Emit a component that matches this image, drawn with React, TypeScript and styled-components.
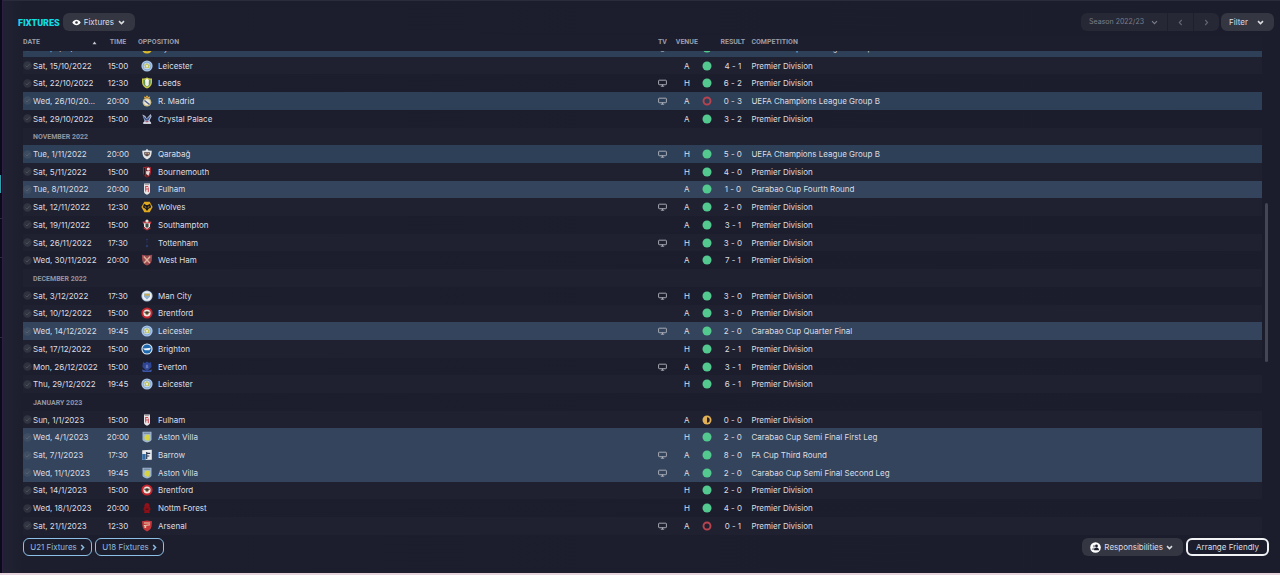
import React, { useLayoutEffect, useRef } from 'react';
import styled, { createGlobalStyle, css } from 'styled-components';

const GlobalStyle = createGlobalStyle`
  *, *::before, *::after { box-sizing: border-box; }
  body {
    margin: 0;
    background: #1b1d2c;
    color: #dcdde2;
    font: 400 8px/14px Inter, "Liberation Sans", sans-serif;
  }
  button, select { font: inherit; color: inherit; }
`;

/* ---------- page frame ---------- */

const Shell = styled.div`
  display: flex;
  height: 100vh;
  min-height: 240px;
  border-bottom: 2px solid #e6d3dc;
`;

const Rail = styled.nav`
  display: flex;
  flex-direction: column;
  flex: none;
  width: 3px;
  padding-top: 175px;
  background: #0b0a1b;
  border-right: 1px solid #2c1f40;
`;

const RailMarker = styled.span`
  width: 1px;
  height: 18px;
  background: #2fa3ad;
`;

const RailLine = styled.span<{ $gap: number }>`
  height: 1px;
  margin-top: ${(p) => p.$gap}px;
  background: #2a2740;
`;

const Page = styled.main`
  display: flex;
  flex-direction: column;
  flex: 1;
  min-width: 0;
  border-top: 1px solid #2a2c3b;
  background: linear-gradient(90deg, #202132 0, #1d1e2d 20px, #1b1d2c 100%);
`;

/* ---------- toolbar ---------- */

const Bar = styled.header`
  display: flex;
  align-items: center;
  flex: none;
  padding: 12px 6px 5px 15px;
`;

const Title = styled.h1`
  margin: 0 3px 0 0;
  padding-top: 2px;
  color: #13dbe6;
  font: 900 9px/16px Roboto, "Liberation Sans", sans-serif;
`;

const Spacer = styled.div`
  flex: 1;
`;

const raised = css`
  background: #343642;
  border-radius: 6px;
  height: 18px;
`;

const ViewPicker = styled.label`
  ${raised}
  display: flex;
  align-items: center;
  gap: 3px;
  padding: 0 10px 0 9px;
`;

const Select = styled.select`
  appearance: none;
  margin: 0;
  padding: 0;
  border: 0;
  background: transparent;
  line-height: 14px;
  cursor: pointer;
`;

const SeasonGroup = styled.div`
  display: flex;
  height: 18px;
  margin-right: 2px;
  border-radius: 6px;
  overflow: hidden;
  background: #262835;
  color: #7c7e89;
`;

const SeasonPicker = styled.label`
  display: flex;
  align-items: center;
  justify-content: space-between;
  width: 86px;
  padding: 0 9px 0 8px;
  font-size: 7px;
`;

const StepButton = styled.button`
  display: flex;
  align-items: center;
  justify-content: center;
  width: 26px;
  padding: 0;
  border: 0;
  border-left: 1px solid #1e202d;
  background: transparent;
  color: #636570;
`;

const MenuButton = styled.button<{ $gap: number }>`
  ${raised}
  display: flex;
  align-items: center;
  gap: ${(p) => p.$gap}px;
  padding: 0 10px 0 8px;
  border: 0;
  cursor: pointer;
`;

/* ---------- fixtures table ---------- */

const ListArea = styled.section`
  display: grid;
  grid-template-columns: minmax(0, 1fr) 18px;
  flex: 1;
  min-height: 0;
  padding-left: 20px;
`;

const Scroller = styled.div`
  overflow-y: auto;
  scrollbar-width: none;
`;

const Table = styled.table`
  width: 100%;
  height: 511px;
  table-layout: fixed;
  border-collapse: collapse;
`;

const Col = styled.col<{ $w?: string }>`
  width: ${(p) => p.$w ?? 'auto'};
`;

const Th = styled.th<{ $align?: string; $indent?: number }>`
  position: sticky;
  top: 0;
  z-index: 1;
  height: 15px;
  padding: 0 0 0 ${(p) => p.$indent ?? 0}px;
  background: #1c1d2d;
  color: #9a9ca7;
  font: 700 7px/13px Roboto, "Liberation Sans", sans-serif;
  text-align: ${(p) => p.$align ?? 'left'};
  white-space: nowrap;
  vertical-align: top;
`;

const SortButton = styled.button`
  display: flex;
  align-items: center;
  justify-content: space-between;
  width: 100%;
  padding: 0 8px 0 0;
  border: 0;
  background: transparent;
`;

type Tone = 'europe' | 'cup' | undefined;

const toneColor = { europe: '#2d4058', cup: '#33445c' };

const Row = styled.tr<{ $tone?: Tone }>`
  background: ${(p) => (p.$tone ? toneColor[p.$tone] : 'transparent')};
  &:nth-child(even) {
    background: ${(p) => (p.$tone ? toneColor[p.$tone] : '#1f2130')};
  }
`;

const Td = styled.td<{ $align?: string }>`
  padding: 0;
  text-align: ${(p) => p.$align ?? 'left'};
  white-space: nowrap;
  line-height: 14px;
  vertical-align: middle;
`;

const MonthCell = styled.th`
  padding: 2px 0 0 10px;
  color: #9395a0;
  font: 700 7px/12px Roboto, "Liberation Sans", sans-serif;
  text-align: left;
  vertical-align: middle;
`;

const Inline = styled.span<{ $indent?: number; $gap?: number }>`
  display: flex;
  align-items: center;
  gap: ${(p) => p.$gap ?? 0}px;
  padding-left: ${(p) => p.$indent ?? 0}px;
`;

const Glyph = styled.svg`
  display: block;
  flex: none;
`;

const CenteredGlyph = styled(Glyph)`
  margin: 0 auto;
`;

const Track = styled.div`
  display: flex;
  flex-direction: column;
  padding-left: 3px;
`;

const TrackGap = styled.span<{ $share: number }>`
  flex: ${(p) => p.$share};
`;

const Thumb = styled.span`
  flex: 159;
  width: 3px;
  border-radius: 2px;
  background: #444653;
`;

/* ---------- footer ---------- */

const Footer = styled.footer`
  display: flex;
  align-items: center;
  flex: none;
  gap: 3px;
  padding: 3px 11px 17px 20px;
`;

const SquadLink = styled.a`
  display: flex;
  align-items: center;
  justify-content: center;
  gap: 3px;
  width: 69px;
  height: 18px;
  border: 1px solid #8cc0e6;
  border-radius: 6px;
  color: #8dbbe0;
  text-decoration: none;
`;

const OutlineButton = styled.button`
  height: 18px;
  width: 83px;
  padding: 0;
  border: 2px solid #f1f2f4;
  border-radius: 6px;
  background: transparent;
  line-height: 14px;
  white-space: nowrap;
  cursor: pointer;
`;

/* ---------- small icons ---------- */

const Chevron = ({ bold }: { bold?: boolean }) => (
  <Glyph width="7" height="5" viewBox="0 0 7 5" aria-hidden="true">
    <path d="M1 1.1 3.5 3.6 6 1.1" fill="none" stroke="currentColor" strokeWidth={bold ? 1.5 : 1.1} />
  </Glyph>
);

const SideChevron = ({ left, bold }: { left?: boolean; bold?: boolean }) => (
  <Glyph width="5" height="7" viewBox="0 0 5 7" aria-hidden="true">
    <path
      d={left ? 'M3.7 1 1.3 3.5 3.7 6' : 'M1.2 1 3.6 3.5 1.2 6'}
      fill="none"
      stroke="currentColor"
      strokeWidth={bold ? 1.5 : 1.1}
    />
  </Glyph>
);

const Eye = () => (
  <Glyph width="9" height="7" viewBox="0 0 9 7" aria-hidden="true">
    <path d="M.3 3.500C1.400 1.700 2.800.8 4.500.8s3.100.9 4.200 2.700C7.600 5.300 6.200 6.200 4.500 6.200S1.400 5.300.3 3.500Z" fill="#fff" />
    <circle cx="4.500" cy="3.500" r="1.300" fill="#343642" />
  </Glyph>
);

const People = () => (
  <Glyph width="11" height="11" viewBox="0 0 11 11" aria-hidden="true">
    <circle cx="5.500" cy="5.500" r="5.300" fill="#fff" />
    <circle cx="4" cy="4.100" r="1.200" fill="#9a9ca5" />
    <path d="M1.800 8c0-1.500.9-2.500 2.200-2.500S6 6.500 6 8Z" fill="#9a9ca5" />
    <circle cx="6.500" cy="4" r="1.400" fill="#1b1d2c" />
    <path d="M4.100 8.200c0-1.700 1-2.700 2.400-2.700s2.500 1 2.500 2.700Z" fill="#1b1d2c" />
  </Glyph>
);

const SortArrow = () => (
  <Glyph width="5" height="4" viewBox="0 0 5 4" aria-hidden="true">
    <path d="M.5 3.300 2.500.6l2 2.700Z" fill="#c9cad1" />
  </Glyph>
);

const Played = () => (
  <Glyph width="9" height="9" viewBox="0 0 9 9" aria-hidden="true">
    <circle cx="4.500" cy="4.500" r="4.200" fill="#6d6f78" fillOpacity=".24" />
    <path d="m2.600 4.700 1.400 1.300 2.500-2.900" fill="none" stroke="#8b8d95" strokeOpacity=".3" strokeWidth="1" />
  </Glyph>
);

const Screen = () => (
  <CenteredGlyph width="9" height="8" viewBox="0 0 9 8" role="img" aria-label="Televised">
    <rect x=".6" y="1.200" width="7.800" height="4.500" rx=".6" fill="none" stroke="#b3b6be" strokeWidth=".9" />
    <path d="M2.800 7.200h3.400M4.500 5.700v1.500" fill="none" stroke="#b3b6be" strokeWidth=".9" />
  </CenteredGlyph>
);

type Outcome = 'win' | 'loss' | 'draw';

const OutcomeDot = ({ kind }: { kind: Outcome }) => (
  <CenteredGlyph width="10" height="10" viewBox="0 0 10 10" role="img" aria-label={kind}>
    {kind === 'win' && <circle cx="5" cy="5" r="4.500" fill="#54c98f" />}
    {kind === 'loss' && <circle cx="5" cy="5" r="3.500" fill="none" stroke="#b8434f" strokeWidth="1.900" />}
    {kind === 'draw' && (
      <>
        <circle cx="5" cy="5" r="4.500" fill="#e2b057" />
        <path d="M5 2.300a2.700 2.700 0 0 1 0 5.400Z" fill="#262029" />
      </>
    )}
  </CenteredGlyph>
);

/* ---------- club crests, drawn on a 12 x 12 grid ---------- */

const shield = 'M2 1.200 6 .6l4 .6v5.300c0 2.600-2 4.200-4 5-2-.8-4-2.400-4-5Z';

const crests: Record<string, React.ReactNode> = {
  Dynamo: (
    <>
      <circle cx="6" cy="6" r="5.500" fill="#d9b92c" />
      <circle cx="6" cy="6" r="3.200" fill="#25262c" />
    </>
  ),
  Leicester: (
    <>
      <circle cx="6" cy="6" r="5.600" fill="#a9c3e6" />
      <circle cx="6" cy="6" r="4.200" fill="#6f9bd6" />
      <circle cx="6" cy="6" r="3.500" fill="#c3d6ea" />
      <path d="m6 2.600 1 2 2.400-.2-1.500 1.800.9 2.400L6 7.500 3.300 8.600l.8-2.400-1.500-1.800 2.400.2Z" fill="#c2c458" />
      <circle cx="6" cy="6.100" r="1" fill="#f1f3ee" />
    </>
  ),
  Leeds: (
    <>
      <path d="M1 1.400Q3.500 2 6 .6q2.500 1.400 5 .8v4c0 3-2.500 5-5 6.200C3.500 10.400 1 8.400 1 5.400Z" fill="#c9c94a" />
      <path d="M2.300 2.800h7.400v2.600c0 2-1.600 3.600-3.700 4.600-2.100-1-3.700-2.600-3.700-4.600Z" fill="#5f9355" />
      <path d="M4.200 3h3.600v5L6 9.600 4.200 8Z" fill="#eef0e4" />
      <circle cx="6" cy="3.400" r="1.600" fill="#f4f5ee" />
    </>
  ),
  'R. Madrid': (
    <>
      <circle cx="6" cy="7.200" r="4.300" fill="#cdbf8a" />
      <circle cx="6" cy="7.200" r="3" fill="#e9e6d8" />
      <path d="m3.500 5.500 5 4" stroke="#4c5d96" strokeWidth="1.500" />
      <path d="M3.200 3.400 3 1.400l1.600.5L6 .3l1.400 1.600L9 1.400l-.2 2Z" fill="#d4a93f" />
      <circle cx="6" cy="2.600" r=".7" fill="#a4443e" />
    </>
  ),
  'Crystal Palace': (
    <>
      <path d="M1.400 1.600 4.300 3l1.300 2.600L9.700.9l.9 2.500-2 3.800 1.800 3.500H2.200l1.300-3Z" fill="#b7c2da" />
      <path d="M2 2.800 5.700 6 9.900 2.400 7.700 7l-1.500.8L4 7.200Z" fill="#41588e" />
      <path d="M2.300 9.200h7.600v1.500H2.300Z" fill="#e1e4ec" />
      <path d="M4.500 8.200h2.800v1H4.500Z" fill="#aa4655" />
    </>
  ),
  Qarabağ: (
    <>
      <path d="M6 .8 7.500 2.400l3.300.3-.4 3.500c-.4 2.500-2 4.200-4.400 5.200-2.400-1-4-2.700-4.400-5.200l-.4-3.500 3.300-.3Z" fill="#e3e4e6" />
      <path d="M3 4.300h6L8.500 7 6 8.400 3.500 7Z" fill="#5a4b4c" />
      <path d="M4.200 5h1.300v1.300H4.200ZM6.600 5h1.300v1.300H6.600Z" fill="#d8b58f" />
    </>
  ),
  Bournemouth: (
    <>
      <path d={shield} fill="#a8242e" />
      <path d="M6 1.500v9.200M3.500 2v7.400" stroke="#26171d" strokeWidth="1.100" />
      <circle cx="7.300" cy="3" r="1.600" fill="#ece7e8" />
      <path d="M5 5.300 9 5 7.500 9.700 5.200 8Z" fill="#e3dadb" />
    </>
  ),
  Fulham: (
    <>
      <path d="M3 .5h6v8.200c0 1.500-1.400 2.400-3 3-1.600-.6-3-1.500-3-3Z" fill="#ebe7e8" />
      <path d="M4.700 3v5.600M4.700 3.500h2.500M4.700 6h2.200M7.300 4.500v4.600" stroke="#cc4a56" strokeWidth="1" fill="none" />
      <path d="M3.700 1.600h4.600" stroke="#6b666e" strokeWidth=".6" />
    </>
  ),
  Wolves: (
    <>
      <path d="M3.300.7h5.400L11.600 6l-2.900 5.300H3.300L.4 6Z" fill="#e0a91e" />
      <path d="M3 2.700 5.200 4h1.600L9 2.700l1.200 3.500-2.500 1.500L6 10 4.300 7.700 1.800 6.200Z" fill="#1d1b1e" />
      <path d="m3.700 5.600 1.500.8M8.300 5.600l-1.500.8" stroke="#e0a91e" strokeWidth=".8" />
    </>
  ),
  Southampton: (
    <>
      <path d="M1.500 2.800 4 2.600h4l2.500.2-.8 2.400H2.300Z" fill="#c44246" />
      <circle cx="6" cy="2" r="1.600" fill="#e6e1dc" />
      <path d="M3 4.200h6v3.400L6 10.800 3 7.600Z" fill="#e8e5e3" />
      <path d="M4.500 4.600h3v3L6 9 4.500 7.600Z" fill="#3c4b42" />
      <path d="m2.500 9.400 3.500 2 3.500-2-.5-1.300L6 10 3 8.100Z" fill="#b93b40" />
    </>
  ),
  Tottenham: (
    <>
      <circle cx="6" cy="2.600" r=".9" fill="#2b3a70" />
      <path d="m5.500 4 1.200.8-.5 2-.8-.8Z" fill="#24305c" />
      <circle cx="6" cy="9" r="1.300" fill="#2a3868" />
    </>
  ),
  'West Ham': (
    <>
      <path d="M.8.800 6 1.600 11.200.800l-.5 5.700C10.300 9 8.500 10.800 6 11.600 3.500 10.800 1.700 9 1.300 6.500Z" fill="#9c4a50" />
      <path d="m2.800 2.600 6 6.400M9.200 2.600 3.200 9" stroke="#dcb29a" strokeWidth="1.400" />
    </>
  ),
  'Man City': (
    <>
      <circle cx="6" cy="6" r="5.600" fill="#b5cbe2" />
      <circle cx="6" cy="6" r="4.600" fill="#eef1f4" />
      <path d="M3 3.500h6v3.300L6 9.500 3 6.800Z" fill="#8fb0d0" />
      <path d="M3.500 3.800h5v1.900h-5Z" fill="#c9a94d" />
    </>
  ),
  Brentford: (
    <>
      <circle cx="6" cy="6" r="5.600" fill="#c3262f" />
      <circle cx="6" cy="6" r="3.600" fill="#eee9e2" />
      <circle cx="6" cy="6" r="1.700" fill="#5e4c2b" />
      <path d="M3.200 5.200h5.600" stroke="#2b2424" strokeWidth=".8" />
    </>
  ),
  Brighton: (
    <>
      <circle cx="6" cy="6" r="5.600" fill="#e3ecf4" />
      <circle cx="6" cy="6" r="4.500" fill="#1e68ad" />
      <path d="M2 5.600 5.500 5.200 10 4.800 8.400 7.300H4Z" fill="#f0f4f8" />
    </>
  ),
  Everton: (
    <>
      <path d="M2 .9 4 2 6 .6 8 2l2-1.100.6 5L6 10.400 1.400 5.900Z" fill="#2e4596" />
      <path d="M1 8.500 6 10l5-1.500-.8 2.400H1.800Z" fill="#3d55a6" />
      <path d="M5 3.700h2l.4 3.600H4.600Z" fill="#6474b4" />
    </>
  ),
  'Aston Villa': (
    <>
      <path d="M1.500.8h9v7.400c0 1.700-2 2.700-4.500 3.400-2.500-.7-4.500-1.700-4.500-3.400Z" fill="#9fb8cf" />
      <path d="M2.700 2.200h6.600" stroke="#6a7a9a" strokeWidth="1" />
      <path d="M4 4.500 6 3.400l2.700.6.3 3L7.500 9.700 4.200 9 3.300 7Z" fill="#d6d440" />
    </>
  ),
  Barrow: (
    <>
      <path d="M1.200 1.300 10.800.7v10.100l-9.600.3Z" fill="#e7eaee" />
      <path d="M1.200 5h3.500v5.800H1.200Z" fill="#2f6ba8" />
      <path d="M5.700 3v7M6 4.300h3.200M6 7h2.300" stroke="#28374f" strokeWidth="1.200" fill="none" />
    </>
  ),
  'Nottm Forest': (
    <>
      <circle cx="6" cy="3.400" r="2.500" fill="#8f1119" />
      <path d="M3.300 4.500h5.400l1 3-1.300 1.400.6 2.200H3l.6-2.200-1.300-1.400Z" fill="#8a1018" />
      <path d="M4.600 7.200h2.800" stroke="#4a0c14" strokeWidth="1" />
    </>
  ),
  Arsenal: (
    <>
      <path d="M1 1.300 6 .6l5 .7-.5 5.300C10 9 8.300 10.600 6 11.500 3.700 10.600 2 9 1.500 6.600Z" fill="#c6373c" />
      <path d="M2.800 5.600 9 4.800M3 3h6" stroke="#e6cfae" strokeWidth="1" />
      <circle cx="4.300" cy="7" r="1.100" fill="#e6cfae" />
    </>
  ),
};

const Crest = ({ club }: { club: string }) => (
  <Glyph width="12" height="12" viewBox="0 0 12 12" aria-hidden="true">
    {crests[club]}
  </Glyph>
);

/* ---------- data ---------- */

interface Match {
  date: string;
  time: string;
  club: string;
  tv?: boolean;
  venue: 'H' | 'A';
  outcome: Outcome;
  score: string;
  competition: string;
  tone?: Tone;
}

const match = (
  date: string,
  time: string,
  club: string,
  tv: boolean,
  venue: 'H' | 'A',
  score: string,
  outcome: Outcome = 'win',
  competition = 'Premier Division',
  tone?: Tone,
): Match => ({ date, time, club, tv, venue, score, outcome, competition, tone });

const europe = 'UEFA Champions League Group B';

const entries: (Match | string)[] = [
  match('Wed, 5/10/2022', '20:00', 'Dynamo', true, 'H', '3 - 0', 'win', europe, 'europe'),
  match('Sat, 15/10/2022', '15:00', 'Leicester', false, 'A', '4 - 1'),
  match('Sat, 22/10/2022', '12:30', 'Leeds', true, 'H', '6 - 2'),
  match('Wed, 26/10/20...', '20:00', 'R. Madrid', true, 'A', '0 - 3', 'loss', europe, 'europe'),
  match('Sat, 29/10/2022', '15:00', 'Crystal Palace', false, 'A', '3 - 2'),
  'NOVEMBER 2022',
  match('Tue, 1/11/2022', '20:00', 'Qarabağ', true, 'H', '5 - 0', 'win', europe, 'europe'),
  match('Sat, 5/11/2022', '15:00', 'Bournemouth', false, 'H', '4 - 0'),
  match('Tue, 8/11/2022', '20:00', 'Fulham', false, 'A', '1 - 0', 'win', 'Carabao Cup Fourth Round', 'cup'),
  match('Sat, 12/11/2022', '12:30', 'Wolves', true, 'A', '2 - 0'),
  match('Sat, 19/11/2022', '15:00', 'Southampton', false, 'A', '3 - 1'),
  match('Sat, 26/11/2022', '17:30', 'Tottenham', true, 'H', '3 - 0'),
  match('Wed, 30/11/2022', '20:00', 'West Ham', false, 'A', '7 - 1'),
  'DECEMBER 2022',
  match('Sat, 3/12/2022', '17:30', 'Man City', true, 'H', '3 - 0'),
  match('Sat, 10/12/2022', '15:00', 'Brentford', false, 'A', '3 - 0'),
  match('Wed, 14/12/2022', '19:45', 'Leicester', true, 'A', '2 - 0', 'win', 'Carabao Cup Quarter Final', 'cup'),
  match('Sat, 17/12/2022', '15:00', 'Brighton', false, 'H', '2 - 1'),
  match('Mon, 26/12/2022', '15:00', 'Everton', true, 'A', '3 - 1'),
  match('Thu, 29/12/2022', '19:45', 'Leicester', false, 'H', '6 - 1'),
  'JANUARY 2023',
  match('Sun, 1/1/2023', '15:00', 'Fulham', false, 'A', '0 - 0', 'draw'),
  match('Wed, 4/1/2023', '20:00', 'Aston Villa', false, 'H', '2 - 0', 'win', 'Carabao Cup Semi Final First Leg', 'cup'),
  match('Sat, 7/1/2023', '17:30', 'Barrow', true, 'A', '8 - 0', 'win', 'FA Cup Third Round', 'cup'),
  match('Wed, 11/1/2023', '19:45', 'Aston Villa', true, 'A', '2 - 0', 'win', 'Carabao Cup Semi Final Second Leg', 'cup'),
  match('Sat, 14/1/2023', '15:00', 'Brentford', false, 'H', '2 - 0'),
  match('Wed, 18/1/2023', '20:00', 'Nottm Forest', false, 'H', '4 - 0'),
  match('Sat, 21/1/2023', '12:30', 'Arsenal', true, 'A', '0 - 1', 'loss'),
];

const MatchRow = ({ m }: { m: Match }) => (
  <Row $tone={m.tone}>
    <Td>
      <Inline $gap={1}>
        <Played />
        {m.date}
      </Inline>
    </Td>
    <Td $align="center">{m.time}</Td>
    <Td>
      <Inline $indent={10} $gap={5}>
        <Crest club={m.club} />
        {m.club}
      </Inline>
    </Td>
    <Td>{m.tv && <Screen />}</Td>
    <Td $align="center">{m.venue}</Td>
    <Td>
      <OutcomeDot kind={m.outcome} />
    </Td>
    <Td $align="center">{m.score}</Td>
    <Td>{m.competition}</Td>
  </Row>
);

export default function App() {
  const scroller = useRef<HTMLDivElement>(null);

  // Open the list at the most recent fixtures.
  useLayoutEffect(() => {
    const el = scroller.current;
    if (el) el.scrollTop = el.scrollHeight;
  }, []);

  return (
    <>
      <GlobalStyle />
      <Shell>
        <Rail aria-label="Sections">
          <RailMarker />
          <RailLine $gap={25} />
          <RailLine $gap={38} />
          <RailLine $gap={79} />
        </Rail>
        <Page>
          <Bar>
            <Title>FIXTURES</Title>
            <ViewPicker>
              <Eye />
              <Select aria-label="View">
                <option>Fixtures</option>
              </Select>
              <Chevron bold />
            </ViewPicker>
            <Spacer />
            <SeasonGroup>
              <SeasonPicker>
                <Select aria-label="Season">
                  <option>Season 2022/23</option>
                </Select>
                <Chevron />
              </SeasonPicker>
              <StepButton aria-label="Previous season">
                <SideChevron left />
              </StepButton>
              <StepButton aria-label="Next season">
                <SideChevron />
              </StepButton>
            </SeasonGroup>
            <MenuButton $gap={9} aria-haspopup="menu">
              Filter
              <Chevron bold />
            </MenuButton>
          </Bar>

          <ListArea>
            <Scroller ref={scroller}>
              <Table>
                <colgroup>
                  <Col $w="82px" />
                  <Col $w="26px" />
                  <Col $w="42%" />
                  <Col $w="22px" />
                  <Col $w="27px" />
                  <Col $w="14px" />
                  <Col $w="37px" />
                  <Col />
                </colgroup>
                <thead>
                  <tr>
                    <Th aria-sort="ascending">
                      <SortButton>
                        DATE
                        <SortArrow />
                      </SortButton>
                    </Th>
                    <Th $align="center">TIME</Th>
                    <Th $indent={7}>OPPOSITION</Th>
                    <Th $align="center">TV</Th>
                    <Th $align="center">VENUE</Th>
                    <Th aria-label="Outcome" />
                    <Th $align="center">RESULT</Th>
                    <Th>COMPETITION</Th>
                  </tr>
                </thead>
                <tbody>
                  {entries.map((e) =>
                    typeof e === 'string' ? (
                      <Row key={e}>
                        <MonthCell colSpan={8}>{e}</MonthCell>
                      </Row>
                    ) : (
                      <MatchRow key={e.date} m={e} />
                    ),
                  )}
                </tbody>
              </Table>
            </Scroller>
            <Track aria-hidden="true">
              <TrackGap $share={167} />
              <Thumb />
              <TrackGap $share={173} />
            </Track>
          </ListArea>

          <Footer>
            <SquadLink href="#u21">
              U21 Fixtures
              <SideChevron bold />
            </SquadLink>
            <SquadLink href="#u18">
              U18 Fixtures
              <SideChevron bold />
            </SquadLink>
            <Spacer />
            <MenuButton $gap={3} aria-haspopup="menu">
              <People />
              Responsibilities
              <Chevron bold />
            </MenuButton>
            <OutlineButton>Arrange Friendly</OutlineButton>
          </Footer>
        </Page>
      </Shell>
    </>
  );
}
